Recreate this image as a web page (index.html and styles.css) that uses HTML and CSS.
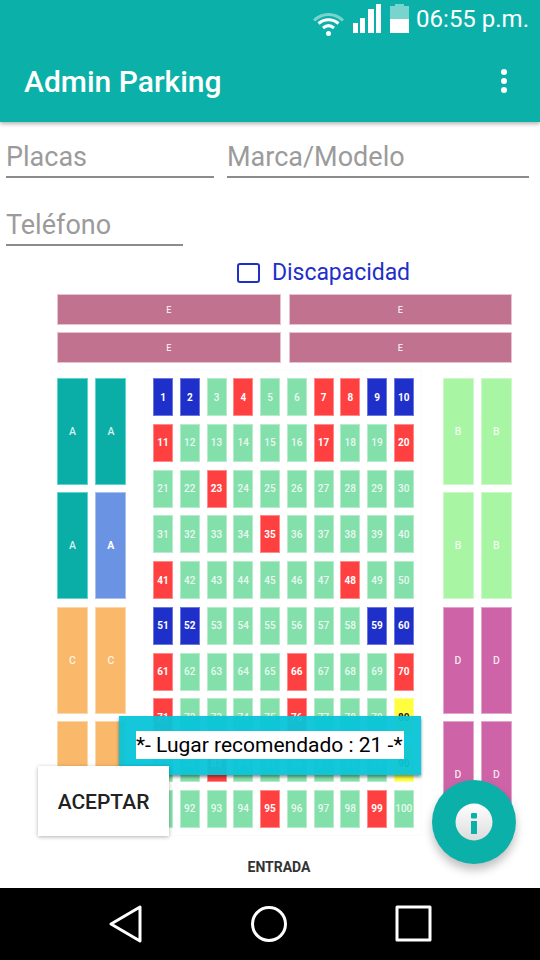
FILE: index.html
```html
<!DOCTYPE html>
<html>
<head>
  <meta charset="utf-8">
  <title>Admin Parking</title>
  <link rel="stylesheet" href="styles.css">
</head>

<body>
  <header class="appbar">
    <div class="status">
      <svg class="wifi" width="33" height="26" viewBox="0 0 33 26">
        <path d="M2 9.500C10.500 1.500 22.500 1.500 31 9.500" class="wifi-dim"/>
        <path d="M6.500 12.500C12.500 7.500 20.500 7.500 26.500 12.500"/>
        <path d="M11 17C14.500 14 18.500 14 22 17"/>
        <circle cx="16.500" cy="22.500" r="2.500"/>
      </svg>
      <svg class="signal" width="29" height="29" viewBox="0 0 29 29">
        <rect x="1" y="19" width="5" height="10"/>
        <rect x="8" y="14" width="5" height="15"/>
        <rect x="16" y="5" width="6" height="24"/>
        <rect x="24" y="0" width="5" height="29"/>
      </svg>
      <svg class="battery" width="19" height="29" viewBox="0 0 19 29">
        <path d="M5 0H14V2H19V15H0V2H5Z" fill="#fff" fill-opacity=".45"/>
        <rect x="0" y="15" width="19" height="14" fill="#fff"/>
      </svg>
      <span class="clock">06:55 p.m.</span>
    </div>
    <div class="toolbar">
      <h1>Admin Parking</h1>
      <div class="kebab"><i></i><i></i><i></i></div>
    </div>
  </header>

  <main class="content">
    <div class="fields">
      <div class="field field-placas">Placas</div>
      <div class="field field-marca">Marca/Modelo</div>
      <div class="field field-tel">Teléfono</div>
    </div>

    <div class="check-row">
      <span class="checkbox"></span>
      <span class="check-label">Discapacidad</span>
    </div>

    <div class="top-lots">
      <div class="lot lot-e">E</div>
      <div class="lot lot-e">E</div>
      <div class="lot lot-e">E</div>
      <div class="lot lot-e">E</div>
    </div>

    <div class="plan">
      <div class="side">
        <div class="lot lot-a">A</div>
        <div class="lot lot-a">A</div>
        <div class="lot lot-a">A</div>
        <div class="lot lot-sel">A</div>
        <div class="lot lot-c">C</div>
        <div class="lot lot-c">C</div>
        <div class="lot lot-c">C</div>
        <div class="lot lot-c">C</div>
      </div>

      <div class="seats">
        <div class="seat blue">1</div><div class="seat blue">2</div><div class="seat">3</div><div class="seat red">4</div><div class="seat">5</div><div class="seat">6</div><div class="seat red">7</div><div class="seat red">8</div><div class="seat blue">9</div><div class="seat blue">10</div>
        <div class="seat red">11</div><div class="seat">12</div><div class="seat">13</div><div class="seat">14</div><div class="seat">15</div><div class="seat">16</div><div class="seat red">17</div><div class="seat">18</div><div class="seat">19</div><div class="seat red">20</div>
        <div class="seat">21</div><div class="seat">22</div><div class="seat red">23</div><div class="seat">24</div><div class="seat">25</div><div class="seat">26</div><div class="seat">27</div><div class="seat">28</div><div class="seat">29</div><div class="seat">30</div>
        <div class="seat">31</div><div class="seat">32</div><div class="seat">33</div><div class="seat">34</div><div class="seat red">35</div><div class="seat">36</div><div class="seat">37</div><div class="seat">38</div><div class="seat">39</div><div class="seat">40</div>
        <div class="seat red">41</div><div class="seat">42</div><div class="seat">43</div><div class="seat">44</div><div class="seat">45</div><div class="seat">46</div><div class="seat">47</div><div class="seat red">48</div><div class="seat">49</div><div class="seat">50</div>
        <div class="seat blue">51</div><div class="seat blue">52</div><div class="seat">53</div><div class="seat">54</div><div class="seat">55</div><div class="seat">56</div><div class="seat">57</div><div class="seat">58</div><div class="seat blue">59</div><div class="seat blue">60</div>
        <div class="seat red">61</div><div class="seat">62</div><div class="seat">63</div><div class="seat">64</div><div class="seat">65</div><div class="seat red">66</div><div class="seat">67</div><div class="seat">68</div><div class="seat">69</div><div class="seat red">70</div>
        <div class="seat red">71</div><div class="seat">72</div><div class="seat">73</div><div class="seat">74</div><div class="seat">75</div><div class="seat red">76</div><div class="seat">77</div><div class="seat">78</div><div class="seat">79</div><div class="seat yellow">80</div>
        <div class="seat">81</div><div class="seat">82</div><div class="seat red">83</div><div class="seat">84</div><div class="seat">85</div><div class="seat">86</div><div class="seat">87</div><div class="seat">88</div><div class="seat">89</div><div class="seat yellow">90</div>
        <div class="seat">91</div><div class="seat">92</div><div class="seat">93</div><div class="seat">94</div><div class="seat red">95</div><div class="seat">96</div><div class="seat">97</div><div class="seat">98</div><div class="seat red">99</div><div class="seat">100</div>
      </div>

      <div class="side">
        <div class="lot lot-b">B</div>
        <div class="lot lot-b">B</div>
        <div class="lot lot-b">B</div>
        <div class="lot lot-b">B</div>
        <div class="lot lot-d">D</div>
        <div class="lot lot-d">D</div>
        <div class="lot lot-d">D</div>
        <div class="lot lot-d">D</div>
      </div>
    </div>

    <div class="entrada">ENTRADA</div>
  </main>

  <nav class="navbar">
    <svg width="34" height="38" viewBox="0 0 34 38"><path d="M31 2V36L2 19Z"/></svg>
    <svg width="38" height="38" viewBox="0 0 38 38"><circle cx="19" cy="19" r="16.500"/></svg>
    <svg width="38" height="38" viewBox="0 0 38 38"><rect x="2" y="2" width="33" height="33"/></svg>
  </nav>

  <div class="toast"><span>*- Lugar recomendado : 21 -*</span></div>
  <button class="accept">ACEPTAR</button>
  <div class="fab">
    <svg width="38" height="38" viewBox="0 0 38 38">
      <defs>
        <linearGradient id="fabfill" x1="0" y1="0" x2="0" y2="1">
          <stop offset="0" stop-color="#ffffff"/>
          <stop offset="1" stop-color="#dcdcdc"/>
        </linearGradient>
      </defs>
      <circle cx="19" cy="19" r="18.500" fill="url(#fabfill)"/>
      <rect x="16" y="10" width="6" height="5.500" rx="1" fill="#0bb1a8"/>
      <rect x="16" y="18" width="6" height="13" fill="#0bb1a8"/>
    </svg>
  </div>
</body>

</html>
```

FILE: styles.css
```css
* {
  box-sizing: border-box;
}

body {
  margin: 0;
  width: 540px;
  height: 960px;
  position: relative;
  overflow: hidden;
  display: flex;
  flex-direction: column;
  background: #fff;
  font-family: Roboto, "Liberation Sans", sans-serif;
}

.appbar {
  height: 122px;
  background: #0bb1a8;
  color: #fff;
  box-shadow: 0 2px 4px rgba(0, 0, 0, .3);
  position: relative;
  z-index: 2;
}

.status {
  height: 40px;
  padding: 4px 11px 0 0;
  display: flex;
  justify-content: flex-end;
  align-items: flex-start;
}

.wifi {
  margin: 7px 7px 0 0;
  fill: #fff;
}

.wifi path {
  fill: none;
  stroke: #fff;
  stroke-width: 3;
}

.wifi .wifi-dim {
  stroke-opacity: .45;
}

.signal {
  fill: #fff;
  margin-right: 9px;
}

.battery {
  margin-right: 7px;
}

.clock {
  font-size: 24px;
  line-height: 32px;
  margin-top: -1px;
}

.toolbar {
  height: 82px;
  padding: 0 33px 0 24px;
  display: flex;
  align-items: center;
  justify-content: space-between;
}

.toolbar h1 {
  margin: 0;
  font-size: 30px;
  font-weight: 500;
}

.kebab {
  display: flex;
  flex-direction: column;
  gap: 3px;
}

.kebab i {
  width: 6px;
  height: 6px;
  border-radius: 50%;
  background: #fff;
}

.content {
  flex: 1;
}

.fields {
  display: grid;
  grid-template-columns: 208px 302px;
  column-gap: 13px;
  row-gap: 12px;
  padding-left: 6px;
}

.field {
  height: 56px;
  border-bottom: 2px solid #8c8c8c;
  color: #9b9b9b;
  font-size: 27px;
  line-height: 32px;
  padding-top: 19px;
}

.field-tel {
  width: 177px;
}

.check-row {
  display: flex;
  align-items: center;
  gap: 12px;
  height: 20px;
  margin-top: 17px;
  padding-left: 237px;
}

.checkbox {
  width: 23px;
  height: 20px;
  border: 2.500px solid #1f2fc9;
  border-radius: 3px;
}

.check-label {
  color: #1f2fc9;
  font-size: 23px;
  letter-spacing: -.05px;
  margin-top: -2px;
}

.top-lots {
  display: grid;
  grid-template-columns: 223.500px 223.500px;
  column-gap: 8px;
  row-gap: 7px;
  margin: 11px 0 0 57px;
}

.lot {
  display: flex;
  align-items: center;
  justify-content: center;
  color: rgba(255, 255, 255, .85);
  font-size: 10.500px;
  font-weight: 500;
}

.lot-e {
  height: 31px;
  background: #c1728f;
  border: 1px solid #e6c3d0;
  font-size: 9px;
}

.plan {
  display: flex;
  align-items: flex-start;
  margin: 15px 0 0 57px;
}

.side {
  width: 70px;
  height: 450px;
  display: grid;
  grid-template-columns: 31px 31px;
  grid-template-rows: repeat(4, 1fr);
  column-gap: 7.400px;
  row-gap: 7.500px;
}

.lot-a {
  background: #0aaea6;
  border: 1px solid #5fd5cf;
}

.lot-sel {
  background: #6b93e4;
  border: 1px solid #a9c1f0;
  font-weight: 700;
  color: #fff;
}

.lot-b {
  background: #a8f5a3;
  border: 1px solid #cdf9ca;
}

.lot-c {
  background: #fab86b;
  border: 1px solid #fcd7a9;
}

.lot-d {
  background: #cf63a8;
  border: 1px solid #e3a5cc;
}

.seats {
  width: 260.750px;
  height: 450px;
  margin: 0 28.750px 0 26px;
  display: grid;
  grid-template-columns: repeat(10, 20px);
  grid-template-rows: repeat(10, 1fr);
  column-gap: 6.750px;
  row-gap: 7.700px;
  outline: 1px solid #fbfbfb;
  outline-offset: 7px;
}

.seat {
  display: flex;
  align-items: center;
  justify-content: center;
  background: #84e0ab;
  border: 1px solid #b5ecca;
  color: rgba(255, 255, 255, .85);
  font-size: 10px;
  font-weight: 500;
}

.red {
  background: #ff4040;
  border-color: #ff8a8a;
  color: #fff;
  font-weight: 700;
}

.blue {
  background: #1f2fc9;
  border-color: #6d78de;
  color: #fff;
  font-weight: 700;
}

.yellow {
  background: #ffff40;
  border-color: #ffff8c;
  color: #222;
  font-weight: 700;
}

.entrada {
  margin-top: 31px;
  padding-left: 18px;
  text-align: center;
  color: #333;
  font-size: 14px;
  line-height: 16px;
  font-weight: 700;
}

.navbar {
  height: 72px;
  background: #000;
  display: flex;
  align-items: center;
  padding: 0 107px 0 109px;
  justify-content: space-between;
}

.navbar svg {
  fill: none;
  stroke: #fff;
  stroke-width: 3;
  stroke-linejoin: round;
}

/* things that float over the plan */
.toast {
  position: absolute;
  left: 119px;
  top: 716px;
  width: 302px;
  height: 59px;
  padding: 15px 17px;
  background: rgba(8, 196, 217, .95);
  box-shadow: 0 2px 3px rgba(0, 0, 0, .45);
}

.toast span {
  display: block;
  width: 268px;
  height: 28px;
  background: #fff;
  color: #000;
  font-size: 21px;
  line-height: 28px;
  white-space: nowrap;
}

.accept {
  position: absolute;
  left: 38px;
  top: 766px;
  width: 131px;
  height: 70px;
  padding-top: 2px;
  border: 0;
  background: #fff;
  box-shadow: 0 1px 4px rgba(0, 0, 0, .3);
  color: #222;
  font-family: inherit;
  font-size: 21px;
  font-weight: 500;
}

.fab {
  position: absolute;
  left: 432px;
  top: 780px;
  width: 84px;
  height: 84px;
  border-radius: 50%;
  background: #0bb1a8;
  box-shadow: 0 6px 10px rgba(0, 0, 0, .25);
  display: flex;
  align-items: center;
  justify-content: center;
}
```
